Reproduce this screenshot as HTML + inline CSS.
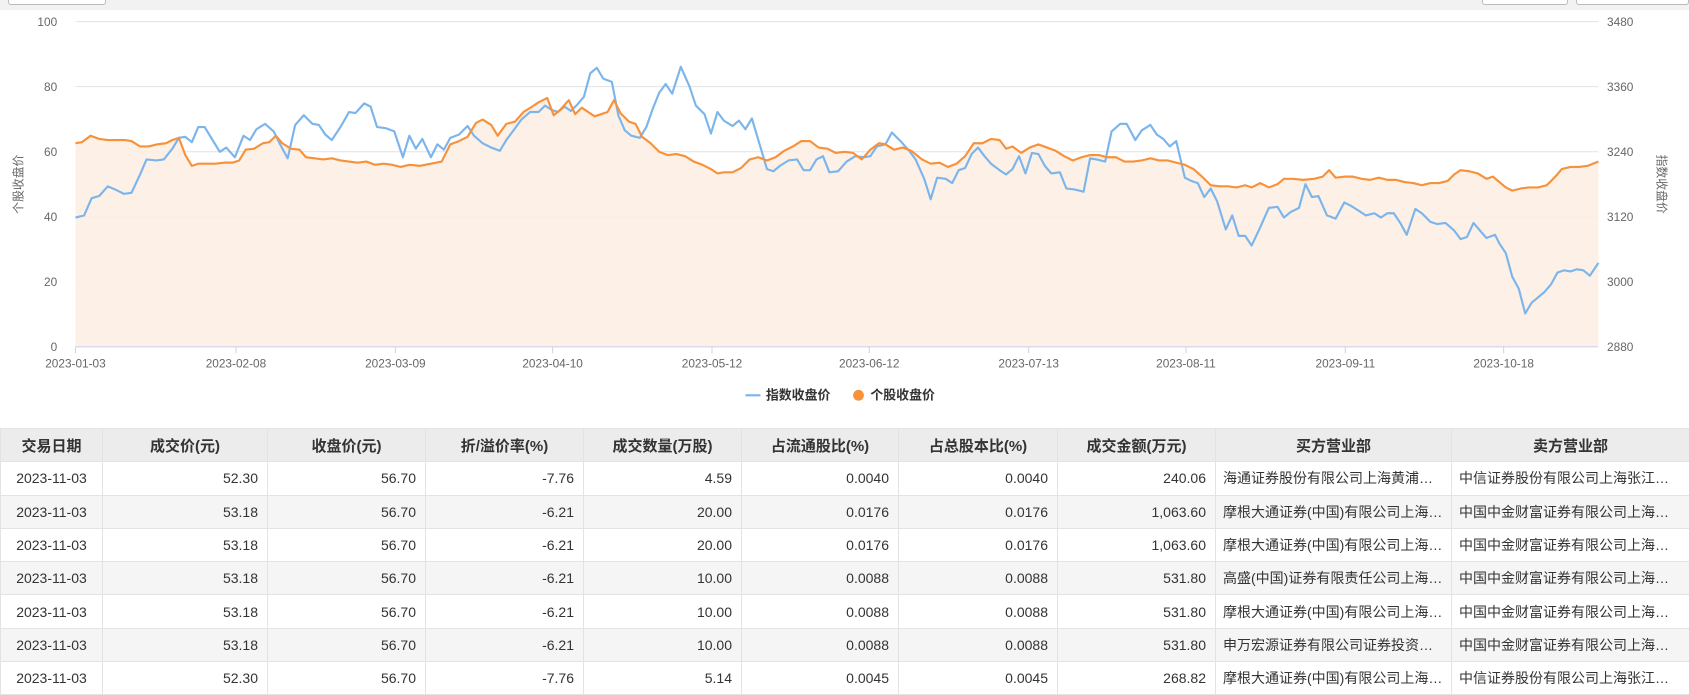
<!DOCTYPE html>
<html><head><meta charset="utf-8">
<style>
*{margin:0;padding:0;box-sizing:border-box}
body{width:1689px;height:694px;overflow:hidden;background:#fff;font-family:"Liberation Sans","Noto Sans CJK SC",sans-serif;color:#333;position:relative}
#top{position:absolute;left:0;top:0;width:1689px;height:10px;background:#f2f2f2}
.btn{position:absolute;top:-2px;height:7px;background:#fff;border:1px solid #bbb;border-top:none;border-radius:0 0 3px 3px}
svg{position:absolute;left:0;top:0}
table{position:absolute;left:0;top:428px;border-collapse:collapse;table-layout:fixed;width:1689px;font-size:14px}
th,td{height:33.3px;border:1px solid #e3e3e3;padding:0 9px;white-space:nowrap;overflow:hidden;text-overflow:ellipsis}
th{background:#ececec;font-weight:bold;color:#333;text-align:center;font-size:15px}
td{text-align:right;color:#333}
td.c{text-align:center}
td.l{text-align:left;padding:0 7px}
tr.g td{background:#f5f5f5}
</style></head><body>
<div id="top"></div>
<div class="btn" style="left:8px;width:98px"></div>
<div class="btn" style="left:1482px;width:86px"></div>
<div class="btn" style="left:1576px;width:113px"></div>
<svg width="1689" height="427.6" viewBox="0 0 1568 397" font-family="Liberation Sans,Noto Sans CJK SC,sans-serif">
<g stroke="#e6e6e6" stroke-width="1">
<line x1="70" x2="1484" y1="20" y2="20"/><line x1="70" x2="1484" y1="80.4" y2="80.4"/><line x1="70" x2="1484" y1="140.8" y2="140.8"/><line x1="70" x2="1484" y1="201.2" y2="201.2"/><line x1="70" x2="1484" y1="261.6" y2="261.6"/>
</g>
<polygon fill="#fdefe4" opacity="0.9" points="70,322 70,133 76,132 84,126 92,129 100,130 108,130 116,130 122,131 130,136 138,136 146,134 154,133 160,130 166,128 172,144 178,154 184,152 192,152 200,152 208,151 216,151 222,149 228,139 236,138 244,133 250,132 256,126 262,133 270,138 278,139 284,146 292,147 300,148 308,147 316,149 324,150 332,151 340,150 348,153 356,152 364,153 372,155 380,153 390,154 400,152 410,150 418,134 426,131 434,127 442,114 448,111 456,116 462,126 470,115 478,113 486,104 494,99 500,95 508,91 514,107 520,102 528,93 534,106 540,100 546,104 552,108 558,106 564,104 570,93 576,105 584,113 590,115 596,127 604,133 612,141 620,144 628,143 636,145 644,150 652,153 660,157 666,161 672,160 680,160 688,156 696,148 704,146 712,149 720,146 728,140 736,136 744,131 752,131 760,137 768,138 776,142 784,141 792,142 800,148 808,139 816,133 822,134 830,139 838,137 846,140 856,148 864,152 872,151 880,155 888,152 896,145 904,133 912,133 920,129 928,130 934,138 940,136 948,142 956,137 964,134 972,137 980,140 988,145 996,149 1004,146 1012,144 1020,144 1028,146 1036,146 1044,150 1052,150 1060,149 1068,147 1076,149 1084,149 1092,151 1100,153 1108,157 1116,164 1124,172 1132,173 1140,173 1148,174 1156,172 1162,174 1170,170 1178,174 1186,171 1192,166 1200,166 1210,167 1220,166 1228,164 1234,158 1240,165 1248,164 1256,164 1264,166 1272,167 1280,165 1288,167 1296,167 1304,169 1312,170 1320,172 1328,170 1336,170 1344,168 1350,162 1356,158 1364,159 1372,161 1380,166 1386,164 1392,169 1398,174 1404,177 1412,175 1420,174 1428,174 1436,172 1444,164 1450,157 1458,155 1466,155 1474,154 1484,150 1484,322"/>
<line x1="70" x2="1484" y1="322" y2="322" stroke="#ccd6eb"/>
<g stroke="#ccd6eb"><line x1="70" x2="70" y1="322" y2="328"/><line x1="219" x2="219" y1="322" y2="328"/><line x1="367" x2="367" y1="322" y2="328"/><line x1="513" x2="513" y1="322" y2="328"/><line x1="661" x2="661" y1="322" y2="328"/><line x1="807" x2="807" y1="322" y2="328"/><line x1="955" x2="955" y1="322" y2="328"/><line x1="1101" x2="1101" y1="322" y2="328"/><line x1="1249" x2="1249" y1="322" y2="328"/><line x1="1396" x2="1396" y1="322" y2="328"/></g>
<polyline fill="none" stroke="#7cb5ec" stroke-width="2" stroke-linejoin="round" points="70,202 78,200 85,184 92,182 100,173 107,176 115,180 122,179 130,162 136,148 145,149 152,148 160,138 166,128 172,127 178,132 184,118 190,118 196,128 204,141 210,137 218,146 226,126 232,130 238,120 246,115 254,122 260,134 267,147 274,116 282,107 290,115 296,116 302,125 308,130 316,118 324,104 330,105 338,96 344,99 350,118 358,119 366,122 374,146 380,126 386,138 392,129 400,146 406,134 412,139 418,128 426,125 434,117 440,126 448,133 456,137 464,140 470,130 476,122 484,111 492,104 500,104 506,98 512,102 518,104 524,99 530,103 536,97 542,90 548,68 554,63 560,73 568,76 574,107 580,121 586,126 594,128 600,118 606,101 612,86 618,78 624,87 632,62 640,80 646,98 654,106 660,124 666,104 672,112 680,117 686,112 692,120 698,110 704,130 712,157 718,159 724,154 732,149 740,148 746,158 752,158 758,148 764,145 770,160 778,159 786,150 794,145 802,146 808,145 814,136 822,134 828,123 836,131 844,140 850,148 858,166 864,185 870,165 878,166 884,170 890,158 896,156 902,143 908,137 914,145 920,152 928,158 934,162 940,157 946,145 952,161 958,142 964,143 970,154 976,161 984,160 990,175 998,176 1006,178 1012,147 1018,148 1026,150 1032,122 1040,115 1046,115 1054,130 1060,121 1068,116 1074,125 1080,129 1086,136 1092,131 1100,165 1106,168 1112,170 1118,183 1124,175 1130,187 1138,213 1144,200 1150,219 1156,219 1162,228 1170,211 1178,193 1186,192 1192,202 1198,197 1206,193 1212,171 1218,183 1224,182 1232,200 1240,203 1248,188 1254,191 1262,196 1268,200 1276,198 1282,202 1288,198 1294,198 1300,207 1306,218 1314,194 1320,198 1328,206 1334,208 1342,207 1350,214 1356,222 1362,220 1368,207 1374,214 1380,221 1388,218 1392,226 1398,235 1404,257 1410,268 1416,291 1422,281 1428,276 1434,271 1440,264 1446,253 1452,251 1458,252 1464,250 1470,251 1476,256 1484,244"/>
<polyline fill="none" stroke="#f7913a" stroke-width="2" stroke-linejoin="round" points="70,133 76,132 84,126 92,129 100,130 108,130 116,130 122,131 130,136 138,136 146,134 154,133 160,130 166,128 172,144 178,154 184,152 192,152 200,152 208,151 216,151 222,149 228,139 236,138 244,133 250,132 256,126 262,133 270,138 278,139 284,146 292,147 300,148 308,147 316,149 324,150 332,151 340,150 348,153 356,152 364,153 372,155 380,153 390,154 400,152 410,150 418,134 426,131 434,127 442,114 448,111 456,116 462,126 470,115 478,113 486,104 494,99 500,95 508,91 514,107 520,102 528,93 534,106 540,100 546,104 552,108 558,106 564,104 570,93 576,105 584,113 590,115 596,127 604,133 612,141 620,144 628,143 636,145 644,150 652,153 660,157 666,161 672,160 680,160 688,156 696,148 704,146 712,149 720,146 728,140 736,136 744,131 752,131 760,137 768,138 776,142 784,141 792,142 800,148 808,139 816,133 822,134 830,139 838,137 846,140 856,148 864,152 872,151 880,155 888,152 896,145 904,133 912,133 920,129 928,130 934,138 940,136 948,142 956,137 964,134 972,137 980,140 988,145 996,149 1004,146 1012,144 1020,144 1028,146 1036,146 1044,150 1052,150 1060,149 1068,147 1076,149 1084,149 1092,151 1100,153 1108,157 1116,164 1124,172 1132,173 1140,173 1148,174 1156,172 1162,174 1170,170 1178,174 1186,171 1192,166 1200,166 1210,167 1220,166 1228,164 1234,158 1240,165 1248,164 1256,164 1264,166 1272,167 1280,165 1288,167 1296,167 1304,169 1312,170 1320,172 1328,170 1336,170 1344,168 1350,162 1356,158 1364,159 1372,161 1380,166 1386,164 1392,169 1398,174 1404,177 1412,175 1420,174 1428,174 1436,172 1444,164 1450,157 1458,155 1466,155 1474,154 1484,150"/>
<g font-size="11" fill="#666" text-anchor="end">
<text x="53" y="24">100</text><text x="53" y="84.4">80</text><text x="53" y="144.8">60</text><text x="53" y="205.2">40</text><text x="53" y="265.6">20</text><text x="53" y="326">0</text>
</g>
<g font-size="11" fill="#666" text-anchor="start">
<text x="1492" y="24">3480</text><text x="1492" y="84.4">3360</text><text x="1492" y="144.8">3240</text><text x="1492" y="205.2">3120</text><text x="1492" y="265.6">3000</text><text x="1492" y="326">2880</text>
</g>
<g font-size="11" fill="#666" text-anchor="middle">
<text x="70" y="341">2023-01-03</text><text x="219" y="341">2023-02-08</text><text x="367" y="341">2023-03-09</text><text x="513" y="341">2023-04-10</text><text x="661" y="341">2023-05-12</text><text x="807" y="341">2023-06-12</text><text x="955" y="341">2023-07-13</text><text x="1101" y="341">2023-08-11</text><text x="1249" y="341">2023-09-11</text><text x="1396" y="341">2023-10-18</text>
</g>
<text font-size="11" fill="#666" text-anchor="middle" transform="translate(21,171) rotate(-90)">个股收盘价</text>
<text font-size="11" fill="#666" text-anchor="middle" transform="translate(1539,171) rotate(90)">指数收盘价</text>
<line x1="692" x2="706" y1="367" y2="367" stroke="#7cb5ec" stroke-width="2"/>
<text x="711" y="371" font-size="12" font-weight="bold" fill="#333">指数收盘价</text>
<circle cx="797" cy="367" r="5" fill="#f7913a"/>
<text x="808" y="371" font-size="12" font-weight="bold" fill="#333">个股收盘价</text>
</svg>
<table>
<colgroup><col style="width:102px"><col style="width:165px"><col style="width:158px"><col style="width:158px"><col style="width:158px"><col style="width:157px"><col style="width:159px"><col style="width:158px"><col style="width:236px"><col style="width:238px"></colgroup>
<tr><th>交易日期</th><th>成交价(元)</th><th>收盘价(元)</th><th>折/溢价率(%)</th><th>成交数量(万股)</th><th>占流通股比(%)</th><th>占总股本比(%)</th><th>成交金额(万元)</th><th>买方营业部</th><th>卖方营业部</th></tr>
<tr><td class="c">2023-11-03</td><td>52.30</td><td>56.70</td><td>-7.76</td><td>4.59</td><td>0.0040</td><td>0.0040</td><td>240.06</td><td class="l">海通证券股份有限公司上海黄浦路证券营业部</td><td class="l">中信证券股份有限公司上海张江高科证券营业部</td></tr>
<tr class="g"><td class="c">2023-11-03</td><td>53.18</td><td>56.70</td><td>-6.21</td><td>20.00</td><td>0.0176</td><td>0.0176</td><td>1,063.60</td><td class="l">摩根大通证券(中国)有限公司上海分公司</td><td class="l">中国中金财富证券有限公司上海分公司</td></tr>
<tr><td class="c">2023-11-03</td><td>53.18</td><td>56.70</td><td>-6.21</td><td>20.00</td><td>0.0176</td><td>0.0176</td><td>1,063.60</td><td class="l">摩根大通证券(中国)有限公司上海分公司</td><td class="l">中国中金财富证券有限公司上海分公司</td></tr>
<tr class="g"><td class="c">2023-11-03</td><td>53.18</td><td>56.70</td><td>-6.21</td><td>10.00</td><td>0.0088</td><td>0.0088</td><td>531.80</td><td class="l">高盛(中国)证券有限责任公司上海浦东新区</td><td class="l">中国中金财富证券有限公司上海分公司</td></tr>
<tr><td class="c">2023-11-03</td><td>53.18</td><td>56.70</td><td>-6.21</td><td>10.00</td><td>0.0088</td><td>0.0088</td><td>531.80</td><td class="l">摩根大通证券(中国)有限公司上海分公司</td><td class="l">中国中金财富证券有限公司上海分公司</td></tr>
<tr class="g"><td class="c">2023-11-03</td><td>53.18</td><td>56.70</td><td>-6.21</td><td>10.00</td><td>0.0088</td><td>0.0088</td><td>531.80</td><td class="l">申万宏源证券有限公司证券投资总部分公司</td><td class="l">中国中金财富证券有限公司上海分公司</td></tr>
<tr><td class="c">2023-11-03</td><td>52.30</td><td>56.70</td><td>-7.76</td><td>5.14</td><td>0.0045</td><td>0.0045</td><td>268.82</td><td class="l">摩根大通证券(中国)有限公司上海分公司</td><td class="l">中信证券股份有限公司上海张江高科证券营业部</td></tr>
</table>
</body></html>
